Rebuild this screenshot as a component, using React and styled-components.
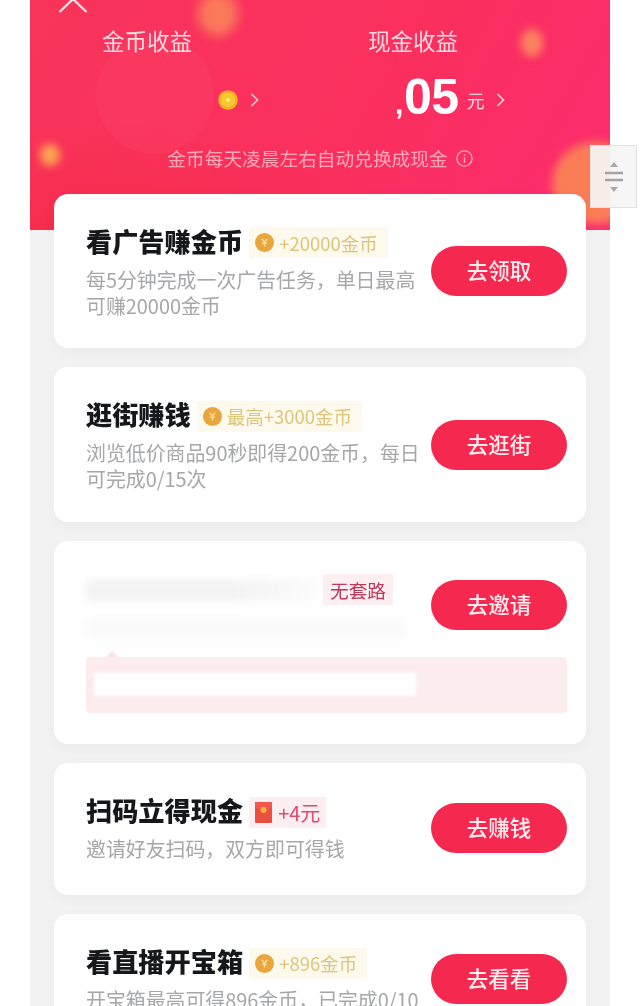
import React from "react"
import styled, { createGlobalStyle } from "styled-components"

const GlobalStyle = createGlobalStyle`
  html, body {
    margin: 0;
    height: 100%;
    background: #fff;
    overflow: hidden;
  }
  body {
    font-family: "Noto Sans CJK SC", "Noto Sans", sans-serif;
  }
`

const Page = styled.div`
  position: relative;
  width: 640px;
  height: 1006px;
  overflow: hidden;
  filter: blur(0.45px);
`

const Phone = styled.main`
  width: 580px;
  height: 1006px;
  margin: 0 30px;
  background: #f2f2f2;
  overflow: hidden;
`

const Header = styled.header`
  position: relative;
  height: 230px;
  box-sizing: border-box;
  padding-top: 25px;
  overflow: hidden;
  background:
    radial-gradient(circle at 125px 95px, rgba(255, 90, 120, 0.14) 0 58px, transparent 60px),
    radial-gradient(ellipse 300px 110px at 60px 230px, rgba(246, 40, 62, 0.55), transparent),
    linear-gradient(120deg, #f8345a 0%, #fa2f5e 60%, #fc2c70 100%);
`

const Blob = styled.span`
  position: absolute;
  left: ${(p) => p.$x}px;
  top: ${(p) => p.$y}px;
  width: ${(p) => p.$w}px;
  height: ${(p) => p.$h}px;
  border-radius: 50%;
  background: ${(p) => p.$color};
  filter: blur(${(p) => p.$blur}px);
`

const CloseIcon = styled.svg`
  position: absolute;
  left: 28px;
  top: 0;
  width: 30px;
  height: 14px;
`

const Stats = styled.div`
  position: relative;
  display: grid;
  grid-template-columns: 234px 298px;
`

const Stat = styled.div`
  display: flex;
  flex-direction: column;
`

const StatLabel = styled.div`
  height: 30px;
  font-size: 22.5px;
  line-height: 30px;
  text-align: center;
  color: rgba(255, 255, 255, 0.82);
`

const StatValue = styled.div`
  display: flex;
  align-items: center;
  height: 60px;
  margin-top: 15px;
  padding-left: ${(p) => p.$offset}px;
`

const Amount = styled.span`
  font-family: "Liberation Sans", sans-serif;
  font-size: 50px;
  font-weight: 700;
  line-height: 60px;
  letter-spacing: -0.5px;
  color: #fff;
`

const Comma = styled.span`
  display: inline-block;
  width: 6px;
  margin-right: 1px;
  font-size: 30px;
  text-indent: -2px;
`

const Unit = styled.span`
  margin-left: 8px;
  font-size: 18px;
  color: rgba(255, 255, 255, 0.8);
`

const Chevron = styled.svg`
  width: 9px;
  height: 16px;
  margin-left: ${(p) => p.$gap}px;
`

const Note = styled.div`
  position: relative;
  display: flex;
  align-items: center;
  justify-content: center;
  gap: 8px;
  height: 28px;
  margin-top: 14px;
  font-size: 18.7px;
  line-height: 28px;
  color: rgba(255, 255, 255, 0.58);
`

const CardList = styled.div`
  position: relative;
  display: flex;
  flex-direction: column;
  gap: 19px;
  margin: -36.5px 24px 0;
`

const Card = styled.section`
  box-sizing: border-box;
  padding: 34px 19px 29px 32px;
  min-height: ${(p) => p.$minHeight || 132}px;
  background: #fff;
  border-radius: 14px;
  box-shadow: 0 4px 14px rgba(0, 0, 0, 0.03);
`

const Row = styled.div`
  display: flex;
  align-items: center;
`

const Main = styled.div`
  flex: 1;
  min-width: 0;
`

const TitleRow = styled.div`
  display: flex;
  align-items: center;
  gap: 6px;
  height: 30px;
`

const Title = styled.h3`
  margin: 0;
  padding-bottom: 3px;
  font-size: 26.2px;
  font-weight: 900;
  line-height: 27px;
  color: #16171b;
`

const Badge = styled.span`
  display: flex;
  align-items: center;
  gap: 5px;
  height: 31px;
  padding: 0 10px 0 6px;
  font-size: 18.5px;
  color: ${(p) => (p.$tone === "red" ? "#e2486c" : "#dcc67e")};
  background: ${(p) => (p.$tone === "red" ? "#fdeef1" : "#fdf9ec")};
`

const PacketBadge = styled(Badge)`
  gap: 6px;
  padding: 0 6px;
  font-size: 20px;
`

const PlainBadge = styled(Badge)`
  padding: 0 7px;
  font-size: 18.7px;
  color: #bd3a5c;
`

const Desc = styled.p`
  margin: 9px 0 0;
  font-size: 19.9px;
  line-height: 26.25px;
  color: #a6a7a9;
`

const ActionButton = styled.button`
  flex: none;
  width: 136px;
  height: 50px;
  margin-top: -4px;
  padding: 0 0 3px;
  border: 0;
  border-radius: 25px;
  font-family: inherit;
  font-size: 21.5px;
  font-weight: 500;
  color: #ffedf0;
  background: #f5294f;
`

const BlurredTitle = styled.div`
  width: 231px;
  height: 22px;
  background: linear-gradient(90deg, #f3f3f4 0 62%, #fbfbfc 100%);
  filter: blur(4px);
`

const BlurredDesc = styled.div`
  width: 320px;
  height: 22px;
  margin-top: 13px;
  background: #fafafa;
  filter: blur(5px);
`

const TipBar = styled.div`
  position: relative;
  display: flex;
  align-items: center;
  height: 56px;
  margin-top: 17px;
  padding-left: 8px;
  border-radius: 4px;
  background: #fdecee;
  filter: blur(0.6px);

  &:before {
    content: "";
    position: absolute;
    left: 20px;
    top: -6px;
    border: 6px solid transparent;
    border-top: 0;
    border-bottom-color: #f7e4e7;
  }
`

const TipText = styled.div`
  width: 322px;
  height: 23px;
  background: #fff;
  filter: blur(1.5px);
  opacity: 0.95;
`

const Scroller = styled.aside`
  position: absolute;
  left: 590px;
  top: 145px;
  display: flex;
  align-items: center;
  justify-content: center;
  box-sizing: border-box;
  width: 47px;
  height: 63px;
  border: 1px solid #e2e2e2;
  background: rgba(246, 245, 245, 0.94);
`

const ScrollIcon = styled.svg`
  width: 20px;
  height: 32px;
`

const ChevronRight = ({ gap, color = "rgba(255,255,255,.75)" }) => (
  <Chevron $gap={gap} viewBox="0 0 9 16" fill="none">
    <path d="M1.5 2 L7.5 8 L1.5 14" stroke={color} strokeWidth="1.7" />
  </Chevron>
)

const HeaderCoin = () => (
  <svg width="20" height="20" viewBox="0 0 20 20">
    <circle cx="10" cy="10" r="9.8" fill="#f3b225" />
    <circle cx="10" cy="10" r="7" fill="#f8c92e" />
    <circle cx="10" cy="10" r="1.8" fill="#fff0a0" />
  </svg>
)

const BadgeCoin = () => (
  <svg width="19" height="19" viewBox="0 0 19 19" style={{ flex: "none" }}>
    <circle cx="9.5" cy="9.5" r="9.5" fill="#e9a63c" />
    <path d="M6.8 5.8 L9.5 9.3 L12.2 5.8 M9.5 9.3 V13.4 M7.2 10.2 H11.8" fill="none" stroke="#f9dc9a" strokeWidth="1.4" />
  </svg>
)

const RedPacket = () => (
  <svg width="17" height="21" viewBox="0 0 17 21" style={{ flex: "none" }}>
    <rect width="17" height="21" rx="1" fill="#e9503f" />
    <path d="M0 5 Q8.5 11 17 5 V1 a1 1 0 0 0 -1 -1 H1 a1 1 0 0 0 -1 1 Z" fill="#f0594a" />
    <circle cx="8.5" cy="8" r="3" fill="#f8b13c" />
  </svg>
)

const tasks = [
  {
    title: "看广告赚金币",
    reward: "+20000金币",
    desc: "每5分钟完成一次广告任务，单日最高可赚20000金币",
    action: "去领取",
  },
  {
    title: "逛街赚钱",
    reward: "最高+3000金币",
    desc: "浏览低价商品90秒即得200金币，每日可完成0/15次",
    action: "去逛街",
  },
  { invite: true, action: "去邀请" },
  {
    title: "扫码立得现金",
    reward: "+4元",
    tone: "red",
    desc: "邀请好友扫码，双方即可得钱",
    action: "去赚钱",
  },
  {
    title: "看直播开宝箱",
    reward: "+896金币",
    desc: "开宝箱最高可得896金币，已完成0/10",
    action: "去看看",
  },
]

const TaskCard = ({ task }) => {
  if (task.invite) {
    return (
      <Card $minHeight={203.5}>
        <Row>
          <Main>
            <TitleRow>
              <BlurredTitle />
              <PlainBadge $tone="red">无套路</PlainBadge>
            </TitleRow>
            <BlurredDesc />
          </Main>
          <ActionButton>{task.action}</ActionButton>
        </Row>
        <TipBar>
          <TipText />
        </TipBar>
      </Card>
    )
  }

  return (
    <Card>
      <Row>
        <Main>
          <TitleRow>
            <Title>{task.title}</Title>
            {task.tone === "red" ? (
              <PacketBadge $tone="red">
                <RedPacket />
                {task.reward}
              </PacketBadge>
            ) : (
              <Badge>
                <BadgeCoin />
                {task.reward}
              </Badge>
            )}
          </TitleRow>
          <Desc>{task.desc}</Desc>
        </Main>
        <ActionButton>{task.action}</ActionButton>
      </Row>
    </Card>
  )
}

const App = () => {
  return (
    <Page>
      <GlobalStyle />
      <Phone>
        <Header>
          <Blob $x={168} $y={-8} $w={40} $h={44} $color="#fb7a5c" $blur={6} />
          <Blob $x={491} $y={29} $w={22} $h={28} $color="#fb8360" $blur={4} />
          <Blob $x={10} $y={144} $w={20} $h={22} $color="#fba552" $blur={4} />
          <Blob $x={522} $y={142} $w={88} $h={82} $color="#fb7d58" $blur={4} />

          <CloseIcon viewBox="0 0 30 14" fill="none">
            <path d="M1.5 12 L15 -1 L28.5 12" stroke="rgba(255,255,255,.82)" strokeWidth="2.4" />
          </CloseIcon>

          <Stats>
            <Stat>
              <StatLabel>金币收益</StatLabel>
              <StatValue $offset={188}>
                <HeaderCoin />
                <ChevronRight gap={12} />
              </StatValue>
            </Stat>
            <Stat>
              <StatLabel>现金收益</StatLabel>
              <StatValue $offset={133}>
                <Amount>
                  <Comma>,</Comma>05
                </Amount>
                <Unit>元</Unit>
                <ChevronRight gap={11} />
              </StatValue>
            </Stat>
          </Stats>

          <Note>
            金币每天凌晨左右自动兑换成现金
            <svg width="17" height="17" viewBox="0 0 17 17" fill="none">
              <circle cx="8.5" cy="8.5" r="7.6" stroke="rgba(255,255,255,.6)" strokeWidth="1.3" />
              <path d="M8.5 7.2 V12.8 M8.5 4.2 V5.8" stroke="rgba(255,255,255,.6)" strokeWidth="1.4" />
            </svg>
          </Note>
        </Header>

        <CardList>
          {tasks.map((task) => (
            <TaskCard key={task.action} task={task} />
          ))}
        </CardList>
      </Phone>

      <Scroller>
        <ScrollIcon viewBox="0 0 20 32">
          <path d="M10 1 L14 6 H6 Z M10 31 L14 26 H6 Z" fill="#a9a9a9" />
          <path d="M1 12 H19 M1 19 H19" stroke="#a3a3a3" strokeWidth="2.4" />
        </ScrollIcon>
      </Scroller>
    </Page>
  )
}

export default App
